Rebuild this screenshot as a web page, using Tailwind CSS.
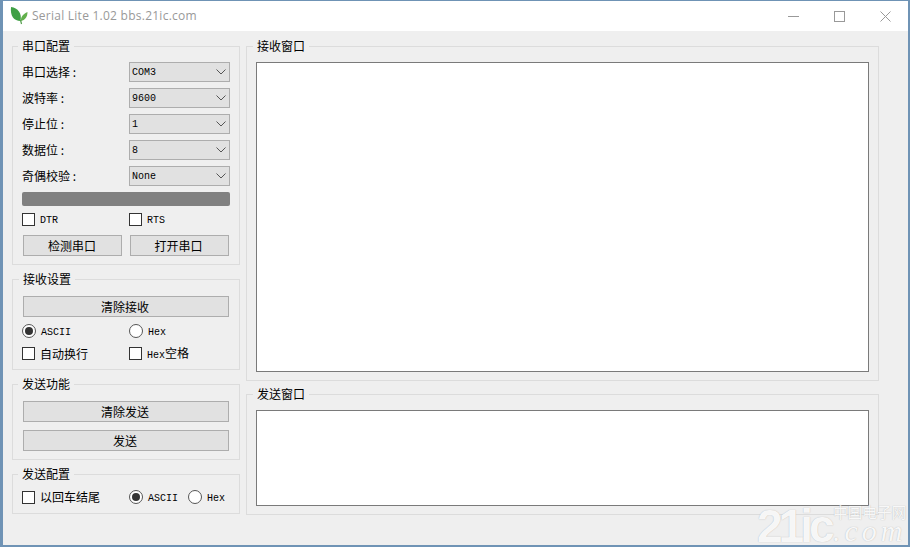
<!DOCTYPE html>
<html lang="zh">
<head>
    <meta charset="UTF-8">
    <title>Serial Lite 1.02</title>
    <script src="https://cdn.jsdelivr.net/npm/@tailwindcss/browser@4"></script>
</head>
<body class="w-[910px] h-[547px] overflow-hidden bg-[#6f93b5] font-['Liberation_Mono','Noto_Sans_CJK_SC',monospace] text-[12px] text-black">
    <div class="relative ml-[3px] mt-[1px] w-[905px] h-[544px] flex flex-col bg-[#efefef]">
        <!-- title bar -->
        <div class="h-[30px] bg-white flex items-center pl-[7px] shrink-0">
            <svg width="18" height="18" viewBox="0 0 18 18">
                <path d="M1 0 C8 1 12 6 10.5 14 C4 14 0 9 1 0 Z" fill="#3f9f45"/>
                <path d="M17.5 5 C17.5 10 15 13 11 14 C10.5 10 13 7 17.5 5 Z" fill="#62b04c"/>
                <path d="M10.5 13 L11.5 17" stroke="#4d9a45" stroke-width="1.2" fill="none"/>
            </svg>
            <span class="ml-[4px] font-['Open_Sans',sans-serif] text-[12px] text-[#999999] tracking-[0.25px]">Serial Lite 1.02 bbs.21ic.com</span>
            <div class="ml-auto flex items-center">
                <svg width="11" height="11" viewBox="0 0 11 11" class="mr-[35px]"><path d="M0 5.5H11" stroke="#999" fill="none"/></svg>
                <svg width="11" height="11" viewBox="0 0 11 11" class="mr-[35px]"><rect x=".5" y=".5" width="10" height="10" stroke="#999" fill="none"/></svg>
                <svg width="11" height="11" viewBox="0 0 11 11" class="mr-[17px]"><path d="M.5 .5L10.5 10.5M10.5 .5L.5 10.5" stroke="#999" fill="none"/></svg>
            </div>
        </div>

        <div class="flex pl-[9px] pt-[15px] gap-[6px]">
            <!-- left column -->
            <div class="w-[228px] flex flex-col gap-[14px]">
                <div class="relative h-[219px] border border-[#dcdcdc] pt-[15px] px-[9px]">
                    <span class="absolute -top-[9px] left-[5px] px-[4px] bg-[#efefef] leading-[16px] font-['Noto_Sans_CJK_SC',sans-serif]">串口配置</span>
                    <div class="flex flex-col gap-[6px]">
                        <div class="flex items-center justify-between h-[20px]"><span class="font-['Noto_Sans_CJK_SC',sans-serif]">串口选择 :</span><div class="w-[101px] h-[20px] border border-[#adadad] bg-[#e1e1e1] flex items-center justify-between pl-[2px] pr-[3px] text-[10px]">COM3<svg width="10" height="6" viewBox="0 0 10 6"><path d="M.5 .5L5 5L9.5 .5" stroke="#555" fill="none"/></svg></div></div>
                        <div class="flex items-center justify-between h-[20px]"><span class="font-['Noto_Sans_CJK_SC',sans-serif]">波特率 :</span><div class="w-[101px] h-[20px] border border-[#adadad] bg-[#e1e1e1] flex items-center justify-between pl-[2px] pr-[3px] text-[10px]">9600<svg width="10" height="6" viewBox="0 0 10 6"><path d="M.5 .5L5 5L9.5 .5" stroke="#555" fill="none"/></svg></div></div>
                        <div class="flex items-center justify-between h-[20px]"><span class="font-['Noto_Sans_CJK_SC',sans-serif]">停止位 :</span><div class="w-[101px] h-[20px] border border-[#adadad] bg-[#e1e1e1] flex items-center justify-between pl-[2px] pr-[3px] text-[10px]">1<svg width="10" height="6" viewBox="0 0 10 6"><path d="M.5 .5L5 5L9.5 .5" stroke="#555" fill="none"/></svg></div></div>
                        <div class="flex items-center justify-between h-[20px]"><span class="font-['Noto_Sans_CJK_SC',sans-serif]">数据位 :</span><div class="w-[101px] h-[20px] border border-[#adadad] bg-[#e1e1e1] flex items-center justify-between pl-[2px] pr-[3px] text-[10px]">8<svg width="10" height="6" viewBox="0 0 10 6"><path d="M.5 .5L5 5L9.5 .5" stroke="#555" fill="none"/></svg></div></div>
                        <div class="flex items-center justify-between h-[20px]"><span class="font-['Noto_Sans_CJK_SC',sans-serif]">奇偶校验 :</span><div class="w-[101px] h-[20px] border border-[#adadad] bg-[#e1e1e1] flex items-center justify-between pl-[2px] pr-[3px] text-[10px]">None<svg width="10" height="6" viewBox="0 0 10 6"><path d="M.5 .5L5 5L9.5 .5" stroke="#555" fill="none"/></svg></div></div>
                    </div>
                    <div class="mt-[6px] h-[14px] rounded-[2px] bg-[#808080]"></div>
                    <div class="mt-[7px] h-[13px] flex items-center text-[10px]">
                        <div class="w-[107px] flex items-center gap-[5px]"><span class="w-[13px] h-[13px] border border-[#333] bg-white"></span><span class="pt-[2px]">DTR</span></div>
                        <div class="flex items-center gap-[5px]"><span class="w-[13px] h-[13px] border border-[#333] bg-white"></span><span class="pt-[2px]">RTS</span></div>
                    </div>
                    <div class="mt-[9px] mx-[1px] flex gap-[8px]">
                        <div class="w-[99px] h-[21px] border border-[#adadad] bg-[#e1e1e1] flex items-center justify-center pr-[1px] font-['Noto_Sans_CJK_SC',sans-serif]">检测串口</div>
                        <div class="w-[99px] h-[21px] border border-[#adadad] bg-[#e1e1e1] flex items-center justify-center pr-[2px] font-['Noto_Sans_CJK_SC',sans-serif]">打开串口</div>
                    </div>
                </div>

                <div class="relative h-[91px] border border-[#dcdcdc] pt-[16px] px-[9px]">
                    <span class="absolute -top-[9px] left-[6px] px-[4px] bg-[#efefef] leading-[16px] font-['Noto_Sans_CJK_SC',sans-serif]">接收设置</span>
                    <div class="mx-[1px] h-[21px] border border-[#adadad] bg-[#e1e1e1] flex items-center justify-center pr-[2px] font-['Noto_Sans_CJK_SC',sans-serif]">清除接收</div>
                    <div class="mt-[7px] h-[14px] flex items-center text-[10px]">
                        <div class="w-[107px] flex items-center gap-[5px]"><span class="w-[14px] h-[14px] rounded-full border border-[#555] bg-white flex items-center justify-center"><span class="w-[8px] h-[8px] rounded-full bg-[#333]"></span></span><span class="pt-[2px]">ASCII</span></div>
                        <div class="flex items-center gap-[5px]"><span class="w-[14px] h-[14px] rounded-full border border-[#555] bg-white"></span><span class="pt-[2px]">Hex</span></div>
                    </div>
                    <div class="mt-[9px] h-[13px] flex items-center text-[10px]">
                        <div class="w-[107px] flex items-center gap-[5px]"><span class="w-[13px] h-[13px] border border-[#333] bg-white"></span><span class="text-[12px] font-['Noto_Sans_CJK_SC',sans-serif]">自动换行</span></div>
                        <div class="flex items-center gap-[5px]"><span class="w-[13px] h-[13px] border border-[#333] bg-white"></span><span>Hex<span class="text-[12px] font-['Noto_Sans_CJK_SC',sans-serif]">空格</span></span></div>
                    </div>
                </div>

                <div class="relative h-[76px] border border-[#dcdcdc] pt-[16px] px-[10px]">
                    <span class="absolute -top-[9px] left-[5px] px-[4px] bg-[#efefef] leading-[16px] font-['Noto_Sans_CJK_SC',sans-serif]">发送功能</span>
                    <div class="h-[21px] border border-[#adadad] bg-[#e1e1e1] flex items-center justify-center pr-[2px] font-['Noto_Sans_CJK_SC',sans-serif]">清除发送</div>
                    <div class="mt-[8px] h-[21px] border border-[#adadad] bg-[#e1e1e1] flex items-center justify-center pr-[2px] font-['Noto_Sans_CJK_SC',sans-serif]">发送</div>
                </div>

                <div class="relative h-[40px] border border-[#dcdcdc] pt-[15px] px-[9px]">
                    <span class="absolute -top-[9px] left-[5px] px-[4px] bg-[#efefef] leading-[16px] font-['Noto_Sans_CJK_SC',sans-serif]">发送配置</span>
                    <div class="h-[14px] flex items-center text-[10px]">
                        <div class="w-[107px] flex items-center gap-[5px]"><span class="w-[13px] h-[13px] border border-[#333] bg-white"></span><span class="text-[12px] font-['Noto_Sans_CJK_SC',sans-serif]">以回车结尾</span></div>
                        <div class="w-[59px] flex items-center gap-[5px]"><span class="w-[14px] h-[14px] rounded-full border border-[#555] bg-white flex items-center justify-center"><span class="w-[8px] h-[8px] rounded-full bg-[#333]"></span></span><span class="pt-[2px]">ASCII</span></div>
                        <div class="flex items-center gap-[5px]"><span class="w-[14px] h-[14px] rounded-full border border-[#555] bg-white"></span><span class="pt-[2px]">Hex</span></div>
                    </div>
                </div>
            </div>

            <!-- right column -->
            <div class="w-[633px] flex flex-col gap-[13px]">
                <div class="relative h-[335px] border border-[#dcdcdc] pt-[15px] px-[9px]">
                    <span class="absolute -top-[9px] left-[6px] px-[4px] bg-[#efefef] leading-[16px] font-['Noto_Sans_CJK_SC',sans-serif]">接收窗口</span>
                    <div class="h-[310px] border border-[#7a7a7a] bg-white"></div>
                </div>
                <div class="relative h-[121px] border border-[#dcdcdc] pt-[15px] px-[9px]">
                    <span class="absolute -top-[9px] left-[6px] px-[4px] bg-[#efefef] leading-[16px] font-['Noto_Sans_CJK_SC',sans-serif]">发送窗口</span>
                    <div class="h-[96px] border border-[#7a7a7a] bg-white"></div>
                </div>
            </div>
        </div>

        <!-- site watermark -->
        <div class="absolute left-[754px] top-[500px] w-[150px] h-[44px] whitespace-nowrap text-white/90 [text-shadow:0_0_1px_#a8a8a8]">
            <span class="absolute left-0 top-[6px] text-[46px] leading-[38px] tracking-[-4px] font-bold font-['Liberation_Sans',sans-serif]">21ic</span>
            <span class="absolute left-[76px] top-[2px] text-[15px] leading-[18px] tracking-[-0.4px] font-['Noto_Sans_CJK_SC',sans-serif]">中国电子网</span>
            <span class="absolute left-[76px] top-[21px] text-[30px] leading-[18px] tracking-[4px] italic font-['Liberation_Serif',serif]">.com</span>
        </div>
    </div>
</body>
</html>
